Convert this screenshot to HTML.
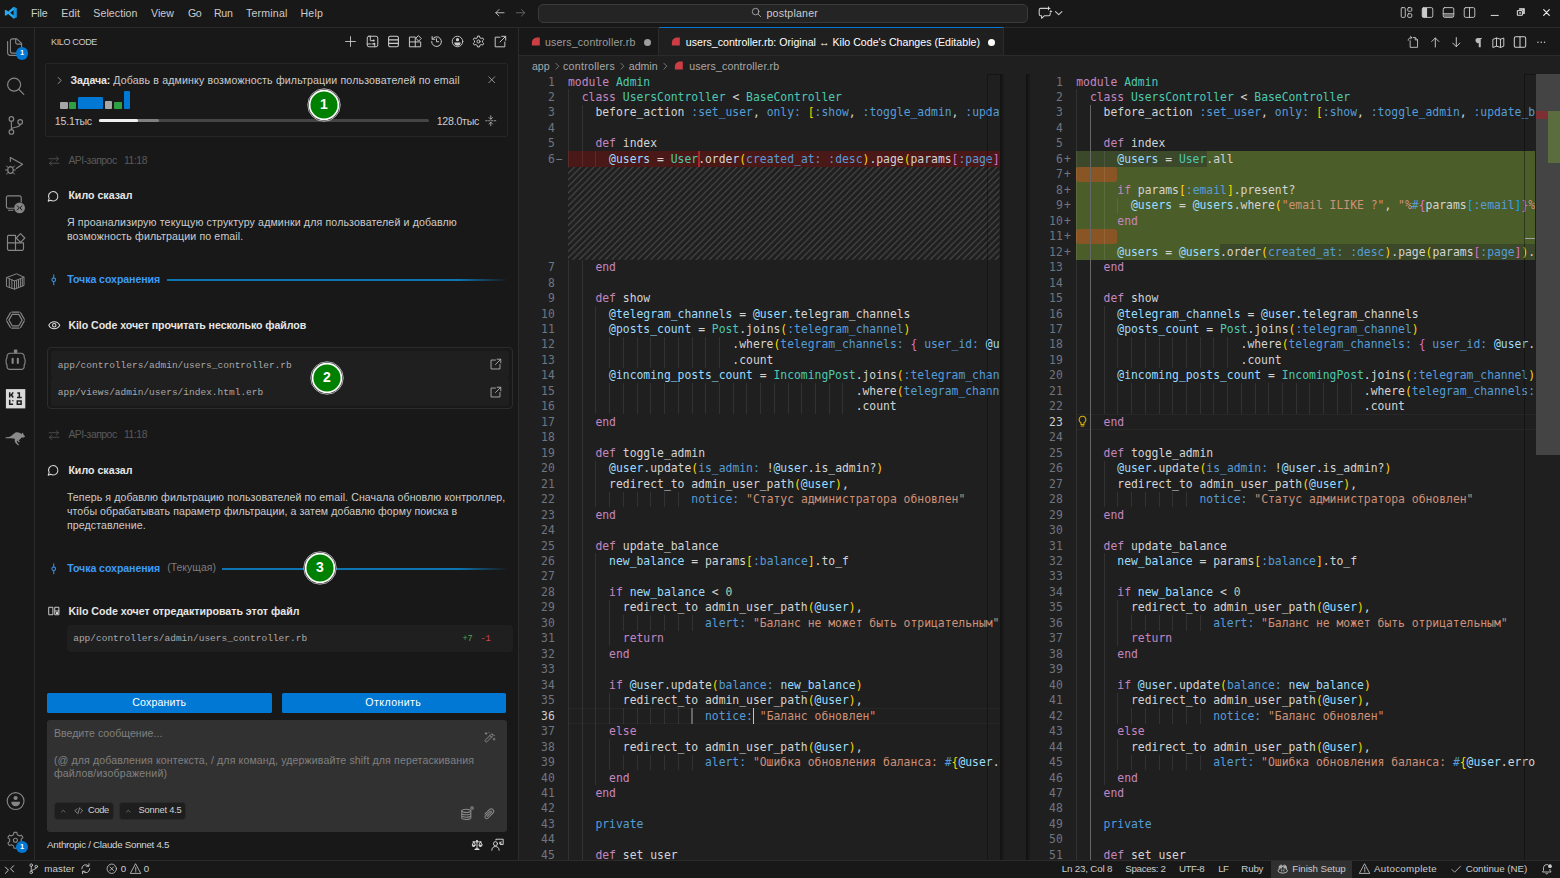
<!DOCTYPE html>
<html lang="ru"><head><meta charset="utf-8"><title>users_controller.rb - postplaner - Visual Studio Code</title>
<style>
html,body{margin:0;padding:0;background:#1f1f1f}
body{width:1560px;height:878px;position:relative;overflow:hidden;font-family:"Liberation Sans","DejaVu Sans",sans-serif;font-size:10.5px;color:#ccc;-webkit-font-smoothing:antialiased}
div,span,i,svg{position:absolute;box-sizing:border-box}
i{position:static;font-style:normal}
.t{white-space:nowrap;line-height:14px;height:14px}
.b{font-weight:bold}
.pane{overflow:hidden;font-family:"DejaVu Sans Mono","Liberation Mono",monospace;font-size:11.396px;color:#d4d4d4}
.cl{left:0;white-space:pre;height:15.466px;line-height:15.466px;letter-spacing:0;margin-top:.55px}
.ln{white-space:pre;height:15.466px;line-height:15.466px;margin-top:.55px;text-align:right;color:#6e7681;font-family:"DejaVu Sans Mono","Liberation Mono",monospace;font-size:11.396px}
.g{width:1px;background:rgba(255,255,255,.085)}
.k{color:#c586c0}.c{color:#4ec9b0}.b1,.b{}.s{color:#ce9178}.v{color:#9cdcfe}.n{color:#b5cea8}
i.b{color:#569cd6;font-weight:normal}
.br0{color:#ffd700}.br1{color:#da70d6}.br2{color:#179fff}
.mono{font-family:"Liberation Mono","DejaVu Sans Mono",monospace}
svg{overflow:visible}
</style></head><body>
<div id="editor" style="left:519px;top:55px;width:1041px;height:805px;background:#1f1f1f"></div><div class="pane" style="left:568.00px;top:0;width:431.50px;height:860px"><div style="left:0;top:151.33px;width:100%;height:15.47px;background:#4b1818"></div><div style="left:130.08px;top:151.33px;width:1.6px;height:15.47px;background:#a8272a"></div><div style="left:0;top:708.11px;width:100%;height:15.47px;border-top:1.6px solid #272727;border-bottom:1.6px solid #272727"></div><div class="g" style="left:0.00px;top:89.47px;height:773.30px"></div><div class="g" style="left:13.72px;top:104.93px;height:757.83px"></div><div class="g" style="left:27.45px;top:151.33px;height:108.26px"></div><div class="g" style="left:27.45px;top:305.99px;height:108.26px"></div><div class="g" style="left:27.45px;top:460.65px;height:46.40px"></div><div class="g" style="left:27.45px;top:553.45px;height:231.99px"></div><div class="g" style="left:41.17px;top:336.92px;height:30.93px"></div><div class="g" style="left:41.17px;top:383.32px;height:30.93px"></div><div class="g" style="left:41.17px;top:491.58px;height:15.47px"></div><div class="g" style="left:41.17px;top:599.84px;height:46.40px"></div><div class="g" style="left:41.17px;top:692.64px;height:30.93px"></div><div class="g" style="left:41.17px;top:739.04px;height:30.93px"></div><div class="g" style="left:54.90px;top:336.92px;height:30.93px"></div><div class="g" style="left:54.90px;top:383.32px;height:30.93px"></div><div class="g" style="left:54.90px;top:491.58px;height:15.47px"></div><div class="g" style="left:54.90px;top:615.31px;height:15.47px"></div><div class="g" style="left:54.90px;top:708.11px;height:15.47px"></div><div class="g" style="left:54.90px;top:754.50px;height:15.47px"></div><div class="g" style="left:68.62px;top:336.92px;height:30.93px"></div><div class="g" style="left:68.62px;top:383.32px;height:30.93px"></div><div class="g" style="left:68.62px;top:491.58px;height:15.47px"></div><div class="g" style="left:68.62px;top:615.31px;height:15.47px"></div><div class="g" style="left:68.62px;top:708.11px;height:15.47px"></div><div class="g" style="left:68.62px;top:754.50px;height:15.47px"></div><div class="g" style="left:82.34px;top:336.92px;height:30.93px"></div><div class="g" style="left:82.34px;top:383.32px;height:30.93px"></div><div class="g" style="left:82.34px;top:491.58px;height:15.47px"></div><div class="g" style="left:82.34px;top:615.31px;height:15.47px"></div><div class="g" style="left:82.34px;top:708.11px;height:15.47px"></div><div class="g" style="left:82.34px;top:754.50px;height:15.47px"></div><div class="g" style="left:96.07px;top:336.92px;height:30.93px"></div><div class="g" style="left:96.07px;top:383.32px;height:30.93px"></div><div class="g" style="left:96.07px;top:491.58px;height:15.47px"></div><div class="g" style="left:96.07px;top:615.31px;height:15.47px"></div><div class="g" style="left:96.07px;top:708.11px;height:15.47px"></div><div class="g" style="left:96.07px;top:754.50px;height:15.47px"></div><div class="g" style="left:109.79px;top:336.92px;height:30.93px"></div><div class="g" style="left:109.79px;top:383.32px;height:30.93px"></div><div class="g" style="left:109.79px;top:491.58px;height:15.47px"></div><div class="g" style="left:109.79px;top:615.31px;height:15.47px"></div><div class="g" style="left:109.79px;top:708.11px;height:15.47px"></div><div class="g" style="left:109.79px;top:754.50px;height:15.47px"></div><div class="g" style="left:123.52px;top:336.92px;height:30.93px"></div><div class="g" style="left:123.52px;top:383.32px;height:30.93px"></div><div class="g" style="left:123.52px;top:615.31px;height:15.47px"></div><div class="g" style="left:123.52px;top:708.11px;height:15.47px"></div><div class="g" style="left:123.52px;top:754.50px;height:15.47px"></div><div class="g" style="left:137.24px;top:336.92px;height:30.93px"></div><div class="g" style="left:137.24px;top:383.32px;height:30.93px"></div><div class="g" style="left:150.96px;top:336.92px;height:30.93px"></div><div class="g" style="left:150.96px;top:383.32px;height:30.93px"></div><div class="g" style="left:164.69px;top:383.32px;height:30.93px"></div><div class="g" style="left:178.41px;top:383.32px;height:30.93px"></div><div class="g" style="left:192.14px;top:383.32px;height:30.93px"></div><div class="g" style="left:205.86px;top:383.32px;height:30.93px"></div><div class="g" style="left:219.58px;top:383.32px;height:30.93px"></div><div class="g" style="left:233.31px;top:383.32px;height:30.93px"></div><div class="g" style="left:247.03px;top:383.32px;height:30.93px"></div><div class="g" style="left:260.76px;top:383.32px;height:30.93px"></div><div class="g" style="left:274.48px;top:383.32px;height:30.93px"></div><svg width="431.50" height="92.80" style="left:0;top:166.80px"><defs><pattern id="hp" width="6.5" height="6.5" patternUnits="userSpaceOnUse"><path d="M-1 7.500L7.500 -1M-1 1L1 -1M5.500 7.500L7.500 5.500" stroke="#cccccc" stroke-opacity=".23" stroke-width="1.150"/></pattern></defs><rect width="100%" height="100%" fill="#1f1f1f"/><rect width="100%" height="100%" fill="url(#hp)"/></svg><div class="cl" style="top:74.00px"><i class="k">module</i> <i class="c">Admin</i></div><div class="cl" style="top:89.47px">  <i class="k">class</i> <i class="c">UsersController</i> &lt; <i class="c">BaseController</i></div><div class="cl" style="top:104.93px">    before_action <i class="b">:set_user</i>, <i class="b">only:</i> <i class="br0">[</i><i class="b">:show</i>, <i class="b">:toggle_admin</i>, <i class="b">:update_balance</i><i class="br0">]</i></div><div class="cl" style="top:135.86px">    <i class="k">def</i> index</div><div class="cl" style="top:151.33px">      <i class="v">@users</i> = <i class="c">User</i>.order<i class="br0">(</i><i class="b">created_at:</i> <i class="b">:desc</i><i class="br0">)</i>.page<i class="br0">(</i>params<i class="br1">[</i><i class="b">:page</i><i class="br1">]</i><i class="br0">)</i>.per<i class="br0">(</i><i class="n">20</i><i class="br0">)</i></div><div class="cl" style="top:259.59px">    <i class="k">end</i></div><div class="cl" style="top:290.52px">    <i class="k">def</i> show</div><div class="cl" style="top:305.99px">      <i class="v">@telegram_channels</i> = <i class="v">@user</i>.telegram_channels</div><div class="cl" style="top:321.46px">      <i class="v">@posts_count</i> = <i class="c">Post</i>.joins<i class="br0">(</i><i class="b">:telegram_channel</i><i class="br0">)</i></div><div class="cl" style="top:336.92px">                        .where<i class="br0">(</i><i class="b">telegram_channels:</i> <i class="br1">{</i> <i class="b">user_id:</i> <i class="v">@user</i>.id <i class="br1">}</i><i class="br0">)</i></div><div class="cl" style="top:352.39px">                        .count</div><div class="cl" style="top:367.85px">      <i class="v">@incoming_posts_count</i> = <i class="c">IncomingPost</i>.joins<i class="br0">(</i><i class="b">:telegram_channel</i><i class="br0">)</i></div><div class="cl" style="top:383.32px">                                          .where<i class="br0">(</i><i class="b">telegram_channels:</i> <i class="br1">{</i> <i class="b">user_id:</i> <i class="v">@user</i>.id <i class="br1">}</i><i class="br0">)</i></div><div class="cl" style="top:398.79px">                                          .count</div><div class="cl" style="top:414.25px">    <i class="k">end</i></div><div class="cl" style="top:445.18px">    <i class="k">def</i> toggle_admin</div><div class="cl" style="top:460.65px">      <i class="v">@user</i>.update<i class="br0">(</i><i class="b">is_admin:</i> !<i class="v">@user</i>.is_admin?<i class="br0">)</i></div><div class="cl" style="top:476.12px">      redirect_to admin_user_path<i class="br0">(</i><i class="v">@user</i><i class="br0">)</i>,</div><div class="cl" style="top:491.58px">                  <i class="b">notice:</i> <i class="s">"Статус администратора обновлен"</i></div><div class="cl" style="top:507.05px">    <i class="k">end</i></div><div class="cl" style="top:537.98px">    <i class="k">def</i> update_balance</div><div class="cl" style="top:553.45px">      <i class="v">new_balance</i> = params<i class="br0">[</i><i class="b">:balance</i><i class="br0">]</i>.to_f</div><div class="cl" style="top:584.38px">      <i class="k">if</i> <i class="v">new_balance</i> &lt; <i class="n">0</i></div><div class="cl" style="top:599.84px">        redirect_to admin_user_path<i class="br0">(</i><i class="v">@user</i><i class="br0">)</i>,</div><div class="cl" style="top:615.31px">                    <i class="b">alert:</i> <i class="s">"Баланс не может быть отрицательным"</i></div><div class="cl" style="top:630.78px">        <i class="k">return</i></div><div class="cl" style="top:646.24px">      <i class="k">end</i></div><div class="cl" style="top:677.17px">      <i class="k">if</i> <i class="v">@user</i>.update<i class="br0">(</i><i class="b">balance:</i> <i class="v">new_balance</i><i class="br0">)</i></div><div class="cl" style="top:692.64px">        redirect_to admin_user_path<i class="br0">(</i><i class="v">@user</i><i class="br0">)</i>,</div><div class="cl" style="top:708.11px">                    <i class="b">notice:</i> <i class="s">"Баланс обновлен"</i></div><div class="cl" style="top:723.57px">      <i class="k">else</i></div><div class="cl" style="top:739.04px">        redirect_to admin_user_path<i class="br0">(</i><i class="v">@user</i><i class="br0">)</i>,</div><div class="cl" style="top:754.50px">                    <i class="b">alert:</i> <i class="s">"Ошибка обновления баланса: </i><i class="b">#</i><i class="br0">{</i><i class="v">@user</i>.errors.full_messages.join<i class="br1">(</i>', '<i class="br1">)</i><i class="br0">}</i><i class="s">"</i></div><div class="cl" style="top:769.97px">      <i class="k">end</i></div><div class="cl" style="top:785.44px">    <i class="k">end</i></div><div class="cl" style="top:816.37px">    <i class="b">private</i></div><div class="cl" style="top:847.30px">    <i class="k">def</i> set_user</div><div class="g" style="left:123.42px;top:708.11px;height:15.47px;background:#666;width:1.2px"></div><div style="left:184.67px;top:708.11px;width:1.5px;height:15.47px;background:#c4c4c4"></div></div><div class="ln" style="left:520px;top:74.00px;width:34.8px;color:#6e7681">1</div><div class="ln" style="left:520px;top:89.47px;width:34.8px;color:#6e7681">2</div><div class="ln" style="left:520px;top:104.93px;width:34.8px;color:#6e7681">3</div><div class="ln" style="left:520px;top:120.40px;width:34.8px;color:#6e7681">4</div><div class="ln" style="left:520px;top:135.86px;width:34.8px;color:#6e7681">5</div><div class="ln" style="left:520px;top:151.33px;width:34.8px;color:#6e7681">6</div><div class="ln" style="left:520px;top:259.59px;width:34.8px;color:#6e7681">7</div><div class="ln" style="left:520px;top:275.06px;width:34.8px;color:#6e7681">8</div><div class="ln" style="left:520px;top:290.52px;width:34.8px;color:#6e7681">9</div><div class="ln" style="left:520px;top:305.99px;width:34.8px;color:#6e7681">10</div><div class="ln" style="left:520px;top:321.46px;width:34.8px;color:#6e7681">11</div><div class="ln" style="left:520px;top:336.92px;width:34.8px;color:#6e7681">12</div><div class="ln" style="left:520px;top:352.39px;width:34.8px;color:#6e7681">13</div><div class="ln" style="left:520px;top:367.85px;width:34.8px;color:#6e7681">14</div><div class="ln" style="left:520px;top:383.32px;width:34.8px;color:#6e7681">15</div><div class="ln" style="left:520px;top:398.79px;width:34.8px;color:#6e7681">16</div><div class="ln" style="left:520px;top:414.25px;width:34.8px;color:#6e7681">17</div><div class="ln" style="left:520px;top:429.72px;width:34.8px;color:#6e7681">18</div><div class="ln" style="left:520px;top:445.18px;width:34.8px;color:#6e7681">19</div><div class="ln" style="left:520px;top:460.65px;width:34.8px;color:#6e7681">20</div><div class="ln" style="left:520px;top:476.12px;width:34.8px;color:#6e7681">21</div><div class="ln" style="left:520px;top:491.58px;width:34.8px;color:#6e7681">22</div><div class="ln" style="left:520px;top:507.05px;width:34.8px;color:#6e7681">23</div><div class="ln" style="left:520px;top:522.51px;width:34.8px;color:#6e7681">24</div><div class="ln" style="left:520px;top:537.98px;width:34.8px;color:#6e7681">25</div><div class="ln" style="left:520px;top:553.45px;width:34.8px;color:#6e7681">26</div><div class="ln" style="left:520px;top:568.91px;width:34.8px;color:#6e7681">27</div><div class="ln" style="left:520px;top:584.38px;width:34.8px;color:#6e7681">28</div><div class="ln" style="left:520px;top:599.84px;width:34.8px;color:#6e7681">29</div><div class="ln" style="left:520px;top:615.31px;width:34.8px;color:#6e7681">30</div><div class="ln" style="left:520px;top:630.78px;width:34.8px;color:#6e7681">31</div><div class="ln" style="left:520px;top:646.24px;width:34.8px;color:#6e7681">32</div><div class="ln" style="left:520px;top:661.71px;width:34.8px;color:#6e7681">33</div><div class="ln" style="left:520px;top:677.17px;width:34.8px;color:#6e7681">34</div><div class="ln" style="left:520px;top:692.64px;width:34.8px;color:#6e7681">35</div><div class="ln" style="left:520px;top:708.11px;width:34.8px;color:#ccc">36</div><div class="ln" style="left:520px;top:723.57px;width:34.8px;color:#6e7681">37</div><div class="ln" style="left:520px;top:739.04px;width:34.8px;color:#6e7681">38</div><div class="ln" style="left:520px;top:754.50px;width:34.8px;color:#6e7681">39</div><div class="ln" style="left:520px;top:769.97px;width:34.8px;color:#6e7681">40</div><div class="ln" style="left:520px;top:785.44px;width:34.8px;color:#6e7681">41</div><div class="ln" style="left:520px;top:800.90px;width:34.8px;color:#6e7681">42</div><div class="ln" style="left:520px;top:816.37px;width:34.8px;color:#6e7681">43</div><div class="ln" style="left:520px;top:831.83px;width:34.8px;color:#6e7681">44</div><div class="ln" style="left:520px;top:847.30px;width:34.8px;color:#6e7681">45</div><div class="ln" style="left:556px;top:151.33px;width:8px;text-align:left">−</div><div class="pane" style="left:1076.20px;top:0;width:459.30px;height:860px"><div style="left:0;top:151.33px;width:100%;height:108.26px;background:#4b5e2a"></div><div style="left:0;top:151.33px;width:130.38px;height:15.47px;background:#3b4829"></div><div style="left:144.10px;top:244.13px;right:0;height:15.47px;background:#3b4829"></div><div style="left:0;top:167.10px;width:41.17px;height:14.87px;background:#8a5524;border-radius:3px"></div><div style="left:0;top:228.96px;width:41.17px;height:14.87px;background:#8a5524;border-radius:3px"></div><div style="left:0;top:414.25px;width:100%;height:15.47px;border-top:1.6px solid #272727;border-bottom:1.6px solid #272727"></div><div class="g" style="left:0.00px;top:89.47px;height:773.30px"></div><div class="g" style="left:13.72px;top:104.93px;height:757.83px"></div><div class="g" style="left:27.45px;top:151.33px;height:108.26px"></div><div class="g" style="left:27.45px;top:305.99px;height:108.26px"></div><div class="g" style="left:27.45px;top:460.65px;height:46.40px"></div><div class="g" style="left:27.45px;top:553.45px;height:231.99px"></div><div class="g" style="left:41.17px;top:197.73px;height:15.47px"></div><div class="g" style="left:41.17px;top:336.92px;height:30.93px"></div><div class="g" style="left:41.17px;top:383.32px;height:30.93px"></div><div class="g" style="left:41.17px;top:491.58px;height:15.47px"></div><div class="g" style="left:41.17px;top:599.84px;height:46.40px"></div><div class="g" style="left:41.17px;top:692.64px;height:30.93px"></div><div class="g" style="left:41.17px;top:739.04px;height:30.93px"></div><div class="g" style="left:54.90px;top:336.92px;height:30.93px"></div><div class="g" style="left:54.90px;top:383.32px;height:30.93px"></div><div class="g" style="left:54.90px;top:491.58px;height:15.47px"></div><div class="g" style="left:54.90px;top:615.31px;height:15.47px"></div><div class="g" style="left:54.90px;top:708.11px;height:15.47px"></div><div class="g" style="left:54.90px;top:754.50px;height:15.47px"></div><div class="g" style="left:68.62px;top:336.92px;height:30.93px"></div><div class="g" style="left:68.62px;top:383.32px;height:30.93px"></div><div class="g" style="left:68.62px;top:491.58px;height:15.47px"></div><div class="g" style="left:68.62px;top:615.31px;height:15.47px"></div><div class="g" style="left:68.62px;top:708.11px;height:15.47px"></div><div class="g" style="left:68.62px;top:754.50px;height:15.47px"></div><div class="g" style="left:82.34px;top:336.92px;height:30.93px"></div><div class="g" style="left:82.34px;top:383.32px;height:30.93px"></div><div class="g" style="left:82.34px;top:491.58px;height:15.47px"></div><div class="g" style="left:82.34px;top:615.31px;height:15.47px"></div><div class="g" style="left:82.34px;top:708.11px;height:15.47px"></div><div class="g" style="left:82.34px;top:754.50px;height:15.47px"></div><div class="g" style="left:96.07px;top:336.92px;height:30.93px"></div><div class="g" style="left:96.07px;top:383.32px;height:30.93px"></div><div class="g" style="left:96.07px;top:491.58px;height:15.47px"></div><div class="g" style="left:96.07px;top:615.31px;height:15.47px"></div><div class="g" style="left:96.07px;top:708.11px;height:15.47px"></div><div class="g" style="left:96.07px;top:754.50px;height:15.47px"></div><div class="g" style="left:109.79px;top:336.92px;height:30.93px"></div><div class="g" style="left:109.79px;top:383.32px;height:30.93px"></div><div class="g" style="left:109.79px;top:491.58px;height:15.47px"></div><div class="g" style="left:109.79px;top:615.31px;height:15.47px"></div><div class="g" style="left:109.79px;top:708.11px;height:15.47px"></div><div class="g" style="left:109.79px;top:754.50px;height:15.47px"></div><div class="g" style="left:123.52px;top:336.92px;height:30.93px"></div><div class="g" style="left:123.52px;top:383.32px;height:30.93px"></div><div class="g" style="left:123.52px;top:615.31px;height:15.47px"></div><div class="g" style="left:123.52px;top:708.11px;height:15.47px"></div><div class="g" style="left:123.52px;top:754.50px;height:15.47px"></div><div class="g" style="left:137.24px;top:336.92px;height:30.93px"></div><div class="g" style="left:137.24px;top:383.32px;height:30.93px"></div><div class="g" style="left:150.96px;top:336.92px;height:30.93px"></div><div class="g" style="left:150.96px;top:383.32px;height:30.93px"></div><div class="g" style="left:164.69px;top:383.32px;height:30.93px"></div><div class="g" style="left:178.41px;top:383.32px;height:30.93px"></div><div class="g" style="left:192.14px;top:383.32px;height:30.93px"></div><div class="g" style="left:205.86px;top:383.32px;height:30.93px"></div><div class="g" style="left:219.58px;top:383.32px;height:30.93px"></div><div class="g" style="left:233.31px;top:383.32px;height:30.93px"></div><div class="g" style="left:247.03px;top:383.32px;height:30.93px"></div><div class="g" style="left:260.76px;top:383.32px;height:30.93px"></div><div class="g" style="left:274.48px;top:383.32px;height:30.93px"></div><div class="g" style="left:13.62px;top:104.93px;height:800px;background:#666;width:1.2px"></div><div class="cl" style="top:74.00px"><i class="k">module</i> <i class="c">Admin</i></div><div class="cl" style="top:89.47px">  <i class="k">class</i> <i class="c">UsersController</i> &lt; <i class="c">BaseController</i></div><div class="cl" style="top:104.93px">    before_action <i class="b">:set_user</i>, <i class="b">only:</i> <i class="br0">[</i><i class="b">:show</i>, <i class="b">:toggle_admin</i>, <i class="b">:update_balance</i><i class="br0">]</i></div><div class="cl" style="top:135.86px">    <i class="k">def</i> index</div><div class="cl" style="top:151.33px">      <i class="v">@users</i> = <i class="c">User</i>.all</div><div class="cl" style="top:182.26px">      <i class="k">if</i> params<i class="br0">[</i><i class="b">:email</i><i class="br0">]</i>.present?</div><div class="cl" style="top:197.73px">        <i class="v">@users</i> = <i class="v">@users</i>.where<i class="br0">(</i><i class="s">"email ILIKE ?"</i>, <i class="s">"%</i><i class="b">#</i><i class="br1">{</i>params<i class="br2">[</i><i class="b">:email</i><i class="br2">]</i><i class="br1">}</i><i class="s">%"</i><i class="br0">)</i></div><div class="cl" style="top:213.19px">      <i class="k">end</i></div><div class="cl" style="top:244.13px">      <i class="v">@users</i> = <i class="v">@users</i>.order<i class="br0">(</i><i class="b">created_at:</i> <i class="b">:desc</i><i class="br0">)</i>.page<i class="br0">(</i>params<i class="br1">[</i><i class="b">:page</i><i class="br1">]</i><i class="br0">)</i>.per<i class="br0">(</i><i class="n">20</i><i class="br0">)</i></div><div class="cl" style="top:259.59px">    <i class="k">end</i></div><div class="cl" style="top:290.52px">    <i class="k">def</i> show</div><div class="cl" style="top:305.99px">      <i class="v">@telegram_channels</i> = <i class="v">@user</i>.telegram_channels</div><div class="cl" style="top:321.46px">      <i class="v">@posts_count</i> = <i class="c">Post</i>.joins<i class="br0">(</i><i class="b">:telegram_channel</i><i class="br0">)</i></div><div class="cl" style="top:336.92px">                        .where<i class="br0">(</i><i class="b">telegram_channels:</i> <i class="br1">{</i> <i class="b">user_id:</i> <i class="v">@user</i>.id <i class="br1">}</i><i class="br0">)</i></div><div class="cl" style="top:352.39px">                        .count</div><div class="cl" style="top:367.85px">      <i class="v">@incoming_posts_count</i> = <i class="c">IncomingPost</i>.joins<i class="br0">(</i><i class="b">:telegram_channel</i><i class="br0">)</i></div><div class="cl" style="top:383.32px">                                          .where<i class="br0">(</i><i class="b">telegram_channels:</i> <i class="br1">{</i> <i class="b">user_id:</i> <i class="v">@user</i>.id <i class="br1">}</i><i class="br0">)</i></div><div class="cl" style="top:398.79px">                                          .count</div><div class="cl" style="top:414.25px">    <i class="k">end</i></div><div class="cl" style="top:445.18px">    <i class="k">def</i> toggle_admin</div><div class="cl" style="top:460.65px">      <i class="v">@user</i>.update<i class="br0">(</i><i class="b">is_admin:</i> !<i class="v">@user</i>.is_admin?<i class="br0">)</i></div><div class="cl" style="top:476.12px">      redirect_to admin_user_path<i class="br0">(</i><i class="v">@user</i><i class="br0">)</i>,</div><div class="cl" style="top:491.58px">                  <i class="b">notice:</i> <i class="s">"Статус администратора обновлен"</i></div><div class="cl" style="top:507.05px">    <i class="k">end</i></div><div class="cl" style="top:537.98px">    <i class="k">def</i> update_balance</div><div class="cl" style="top:553.45px">      <i class="v">new_balance</i> = params<i class="br0">[</i><i class="b">:balance</i><i class="br0">]</i>.to_f</div><div class="cl" style="top:584.38px">      <i class="k">if</i> <i class="v">new_balance</i> &lt; <i class="n">0</i></div><div class="cl" style="top:599.84px">        redirect_to admin_user_path<i class="br0">(</i><i class="v">@user</i><i class="br0">)</i>,</div><div class="cl" style="top:615.31px">                    <i class="b">alert:</i> <i class="s">"Баланс не может быть отрицательным"</i></div><div class="cl" style="top:630.78px">        <i class="k">return</i></div><div class="cl" style="top:646.24px">      <i class="k">end</i></div><div class="cl" style="top:677.17px">      <i class="k">if</i> <i class="v">@user</i>.update<i class="br0">(</i><i class="b">balance:</i> <i class="v">new_balance</i><i class="br0">)</i></div><div class="cl" style="top:692.64px">        redirect_to admin_user_path<i class="br0">(</i><i class="v">@user</i><i class="br0">)</i>,</div><div class="cl" style="top:708.11px">                    <i class="b">notice:</i> <i class="s">"Баланс обновлен"</i></div><div class="cl" style="top:723.57px">      <i class="k">else</i></div><div class="cl" style="top:739.04px">        redirect_to admin_user_path<i class="br0">(</i><i class="v">@user</i><i class="br0">)</i>,</div><div class="cl" style="top:754.50px">                    <i class="b">alert:</i> <i class="s">"Ошибка обновления баланса: </i><i class="b">#</i><i class="br0">{</i><i class="v">@user</i>.errors.full_messages.join<i class="br1">(</i>', '<i class="br1">)</i><i class="br0">}</i><i class="s">"</i></div><div class="cl" style="top:769.97px">      <i class="k">end</i></div><div class="cl" style="top:785.44px">    <i class="k">end</i></div><div class="cl" style="top:816.37px">    <i class="b">private</i></div><div class="cl" style="top:847.30px">    <i class="k">def</i> set_user</div></div><div class="ln" style="left:1028px;top:74.00px;width:34.8px;color:#6e7681">1</div><div class="ln" style="left:1028px;top:89.47px;width:34.8px;color:#6e7681">2</div><div class="ln" style="left:1028px;top:104.93px;width:34.8px;color:#6e7681">3</div><div class="ln" style="left:1028px;top:120.40px;width:34.8px;color:#6e7681">4</div><div class="ln" style="left:1028px;top:135.86px;width:34.8px;color:#6e7681">5</div><div class="ln" style="left:1028px;top:151.33px;width:34.8px;color:#6e7681">6</div><div class="ln" style="left:1028px;top:166.80px;width:34.8px;color:#6e7681">7</div><div class="ln" style="left:1028px;top:182.26px;width:34.8px;color:#6e7681">8</div><div class="ln" style="left:1028px;top:197.73px;width:34.8px;color:#6e7681">9</div><div class="ln" style="left:1028px;top:213.19px;width:34.8px;color:#6e7681">10</div><div class="ln" style="left:1028px;top:228.66px;width:34.8px;color:#6e7681">11</div><div class="ln" style="left:1028px;top:244.13px;width:34.8px;color:#6e7681">12</div><div class="ln" style="left:1028px;top:259.59px;width:34.8px;color:#6e7681">13</div><div class="ln" style="left:1028px;top:275.06px;width:34.8px;color:#6e7681">14</div><div class="ln" style="left:1028px;top:290.52px;width:34.8px;color:#6e7681">15</div><div class="ln" style="left:1028px;top:305.99px;width:34.8px;color:#6e7681">16</div><div class="ln" style="left:1028px;top:321.46px;width:34.8px;color:#6e7681">17</div><div class="ln" style="left:1028px;top:336.92px;width:34.8px;color:#6e7681">18</div><div class="ln" style="left:1028px;top:352.39px;width:34.8px;color:#6e7681">19</div><div class="ln" style="left:1028px;top:367.85px;width:34.8px;color:#6e7681">20</div><div class="ln" style="left:1028px;top:383.32px;width:34.8px;color:#6e7681">21</div><div class="ln" style="left:1028px;top:398.79px;width:34.8px;color:#6e7681">22</div><div class="ln" style="left:1028px;top:414.25px;width:34.8px;color:#ccc">23</div><div class="ln" style="left:1028px;top:429.72px;width:34.8px;color:#6e7681">24</div><div class="ln" style="left:1028px;top:445.18px;width:34.8px;color:#6e7681">25</div><div class="ln" style="left:1028px;top:460.65px;width:34.8px;color:#6e7681">26</div><div class="ln" style="left:1028px;top:476.12px;width:34.8px;color:#6e7681">27</div><div class="ln" style="left:1028px;top:491.58px;width:34.8px;color:#6e7681">28</div><div class="ln" style="left:1028px;top:507.05px;width:34.8px;color:#6e7681">29</div><div class="ln" style="left:1028px;top:522.51px;width:34.8px;color:#6e7681">30</div><div class="ln" style="left:1028px;top:537.98px;width:34.8px;color:#6e7681">31</div><div class="ln" style="left:1028px;top:553.45px;width:34.8px;color:#6e7681">32</div><div class="ln" style="left:1028px;top:568.91px;width:34.8px;color:#6e7681">33</div><div class="ln" style="left:1028px;top:584.38px;width:34.8px;color:#6e7681">34</div><div class="ln" style="left:1028px;top:599.84px;width:34.8px;color:#6e7681">35</div><div class="ln" style="left:1028px;top:615.31px;width:34.8px;color:#6e7681">36</div><div class="ln" style="left:1028px;top:630.78px;width:34.8px;color:#6e7681">37</div><div class="ln" style="left:1028px;top:646.24px;width:34.8px;color:#6e7681">38</div><div class="ln" style="left:1028px;top:661.71px;width:34.8px;color:#6e7681">39</div><div class="ln" style="left:1028px;top:677.17px;width:34.8px;color:#6e7681">40</div><div class="ln" style="left:1028px;top:692.64px;width:34.8px;color:#6e7681">41</div><div class="ln" style="left:1028px;top:708.11px;width:34.8px;color:#6e7681">42</div><div class="ln" style="left:1028px;top:723.57px;width:34.8px;color:#6e7681">43</div><div class="ln" style="left:1028px;top:739.04px;width:34.8px;color:#6e7681">44</div><div class="ln" style="left:1028px;top:754.50px;width:34.8px;color:#6e7681">45</div><div class="ln" style="left:1028px;top:769.97px;width:34.8px;color:#6e7681">46</div><div class="ln" style="left:1028px;top:785.44px;width:34.8px;color:#6e7681">47</div><div class="ln" style="left:1028px;top:800.90px;width:34.8px;color:#6e7681">48</div><div class="ln" style="left:1028px;top:816.37px;width:34.8px;color:#6e7681">49</div><div class="ln" style="left:1028px;top:831.83px;width:34.8px;color:#6e7681">50</div><div class="ln" style="left:1028px;top:847.30px;width:34.8px;color:#6e7681">51</div><div class="ln" style="left:1064px;top:151.33px;width:8px;text-align:left">+</div><div class="ln" style="left:1064px;top:166.80px;width:8px;text-align:left">+</div><div class="ln" style="left:1064px;top:182.26px;width:8px;text-align:left">+</div><div class="ln" style="left:1064px;top:197.73px;width:8px;text-align:left">+</div><div class="ln" style="left:1064px;top:213.19px;width:8px;text-align:left">+</div><div class="ln" style="left:1064px;top:228.66px;width:8px;text-align:left">+</div><div class="ln" style="left:1064px;top:244.13px;width:8px;text-align:left">+</div><div style="left:987.2px;top:74px;width:1px;height:786px;background:rgba(0,0,0,.32)"></div><div style="left:987.2px;top:74px;width:12.3px;height:1px;background:#141414"></div><div style="left:999.5px;top:74px;width:5px;height:786px;background:linear-gradient(90deg,rgba(0,0,0,.45),rgba(0,0,0,0))"></div><div style="left:1026px;top:74px;width:5px;height:786px;background:linear-gradient(90deg,rgba(0,0,0,.5),rgba(0,0,0,0))"></div><div style="left:1524.3px;top:74px;width:1px;height:786px;background:rgba(0,0,0,.38)"></div><div style="left:1524.3px;top:74px;width:11px;height:1px;background:#141414"></div><div style="left:1535.5px;top:74px;width:24.5px;height:381px;background:#444"></div><div style="left:1535.5px;top:111px;width:12.3px;height:8px;background:#7d3034"></div><div style="left:1547.8px;top:111.4px;width:12.2px;height:51.6px;background:#5b6c3f"></div><div style="left:1525.3px;top:237.6px;width:10.2px;height:1.6px;background:#a0a0a0"></div>
<div style="left:0;top:0;width:1560px;height:28px;background:#181818;border-bottom:1px solid #2b2b2b"></div>
<svg viewBox="0 0 16 16" width="13.50" height="13.50" style="left:3.75px;top:6.25px;color:#ccc;"><path fill="#2aaaf2" d="M11.5 1L15 2.6v10.8L11.5 15 5 9.5 2.2 11.7 1 11V5l1.2-.7L5 6.5z M11.5 4.8L7.2 8l4.3 3.2z"/><path fill="#0a7bc9" d="M11.5 1L15 2.6v10.8L11.5 15z" opacity=".55"/></svg>
<div class="t" style="letter-spacing:-0.145px;left:31.00px;top:5.90px;font-size:10.6px;color:#cccccc;">File</div>
<div class="t" style="letter-spacing:0.109px;left:61.30px;top:5.90px;font-size:10.6px;color:#cccccc;">Edit</div>
<div class="t" style="letter-spacing:0.067px;left:93.30px;top:5.90px;font-size:10.6px;color:#cccccc;">Selection</div>
<div class="t" style="letter-spacing:0.055px;left:151.00px;top:5.90px;font-size:10.6px;color:#cccccc;">View</div>
<div class="t" style="letter-spacing:-0.570px;left:188.00px;top:5.90px;font-size:10.6px;color:#cccccc;">Go</div>
<div class="t" style="letter-spacing:-0.312px;left:214.00px;top:5.90px;font-size:10.6px;color:#cccccc;">Run</div>
<div class="t" style="letter-spacing:0.184px;left:246.00px;top:5.90px;font-size:10.6px;color:#cccccc;">Terminal</div>
<div class="t" style="letter-spacing:0.176px;left:300.50px;top:5.90px;font-size:10.6px;color:#cccccc;">Help</div>
<svg viewBox="0 0 16 16" width="11.50" height="11.50" style="left:494.25px;top:6.85px;color:#cccccc;"><path fill="none" stroke="currentColor" stroke-width="1.2" stroke-linecap="round" stroke-linejoin="round" d="M14 8H2.5 M7 3.5L2.5 8l4.5 4.5"/></svg>
<svg viewBox="0 0 16 16" width="11.50" height="11.50" style="left:515.05px;top:6.85px;color:#6f6f6f;"><path fill="none" stroke="currentColor" stroke-width="1.2" stroke-linecap="round" stroke-linejoin="round" d="M2 8h11.5 M9 3.5l4.5 4.5-4.5 4.5"/></svg>
<div style="left:538.2px;top:3.5px;width:490px;height:19.5px;background:#242424;border:1px solid #3a3a3a;border-radius:5px"></div>
<svg viewBox="0 0 16 16" width="10.50" height="10.50" style="left:750.75px;top:7.05px;color:#bbbbbb;"><circle fill="none" stroke="currentColor" stroke-width="1.2" stroke-linecap="round" stroke-linejoin="round" cx="7" cy="7" r="5"/><path fill="none" stroke="currentColor" stroke-width="1.2" stroke-linecap="round" stroke-linejoin="round" d="M10.8 10.8l4 4"/></svg>
<div class="t" style="letter-spacing:0.202px;left:766.50px;top:5.90px;font-size:10.6px;color:#cccccc;">postplaner</div>
<svg viewBox="1036 4 30 18" width="30" height="18" style="left:1036px;top:4px"><path d="M1046.6 8.4H1040.7a1.5 1.5 0 0 0-1.5 1.5v4.4a1.5 1.5 0 0 0 1.5 1.5h.9v2.5l2.7-2.5h4.4a1.5 1.5 0 0 0 1.5-1.5v-1" fill="none" stroke="#ccc" stroke-width="1.05" stroke-linejoin="round" stroke-linecap="round"/><path fill="#ddd" d="M1048.5 6l.7 1.7 1.7.6-1.7.6-.7 1.700-.7-1.700-1.700-.6 1.700-.6z M1050.900 9.800l.5 1.200 1.200.5-1.200.5-.5 1.200-.5-1.200-1.200-.5 1.200-.5z"/><path d="M1055.500 11.600l3.200 3.100 3.200-3.100" fill="none" stroke="#ccc" stroke-width="1.050" stroke-linejoin="round" stroke-linecap="round"/></svg>
<svg viewBox="0 0 16 16" width="13.00" height="13.00" style="left:1399.50px;top:6.20px;color:#cccccc;"><rect fill="none" stroke="currentColor" stroke-width="1.1" stroke-linecap="round" stroke-linejoin="round" x="1.5" y="2" width="5" height="12" rx="1.2"/><rect fill="none" stroke="currentColor" stroke-width="1.1" stroke-linecap="round" stroke-linejoin="round" x="9.5" y="2" width="5" height="4.5" rx="1.2"/><rect fill="none" stroke="currentColor" stroke-width="1.1" stroke-linecap="round" stroke-linejoin="round" x="9.5" y="9.5" width="5" height="4.5" rx="1.2"/></svg>
<svg viewBox="0 0 16 16" width="13.00" height="13.00" style="left:1420.50px;top:6.20px;color:#cccccc;"><rect fill="none" stroke="currentColor" stroke-width="1.1" stroke-linecap="round" stroke-linejoin="round" x="1.5" y="2" width="13" height="12" rx="1.8"/><path fill="currentColor" d="M3 2h4.5v12H3a1.5 1.5 0 0 1-1.5-1.5v-9A1.5 1.5 0 0 1 3 2z"/></svg>
<svg viewBox="0 0 16 16" width="13.00" height="13.00" style="left:1441.80px;top:6.20px;color:#cccccc;"><rect fill="none" stroke="currentColor" stroke-width="1.1" stroke-linecap="round" stroke-linejoin="round" x="1.5" y="2" width="13" height="12" rx="1.8"/><path fill="none" stroke="currentColor" stroke-width="1.1" stroke-linecap="round" stroke-linejoin="round" d="M1.5 9.5h13"/><path fill="currentColor" opacity=".45" d="M2 10h12v2.5a1 1 0 0 1-1 1H3a1 1 0 0 1-1-1z"/></svg>
<svg viewBox="0 0 16 16" width="13.00" height="13.00" style="left:1463.00px;top:6.20px;color:#cccccc;"><rect fill="none" stroke="currentColor" stroke-width="1.1" stroke-linecap="round" stroke-linejoin="round" x="1.5" y="2" width="13" height="12" rx="1.8"/><path fill="none" stroke="currentColor" stroke-width="1.1" stroke-linecap="round" stroke-linejoin="round" d="M8 2v12"/></svg>
<svg viewBox="0 0 16 16" width="9.50" height="9.50" style="left:1490.05px;top:7.85px;color:#e6e6e6;"><path fill="none" stroke="currentColor" stroke-width="1.6" stroke-linecap="round" stroke-linejoin="round" d="M2 12.5h12"/></svg>
<svg viewBox="0 0 16 16" width="10.00" height="10.00" style="left:1516.00px;top:7.20px;color:#e6e6e6;"><path fill="currentColor" d="M5 2h9v9h-2.5V4.5H5z"/><rect fill="none" stroke="currentColor" stroke-width="1.6" stroke-linecap="round" stroke-linejoin="round" x="2.8" y="5.8" width="7.4" height="7.4"/><rect x="5.3" y="8.3" width="2.4" height="2.4" fill="currentColor"/></svg>
<svg viewBox="0 0 16 16" width="9.00" height="9.00" style="left:1542.40px;top:7.70px;color:#f0f0f0;"><path fill="none" stroke="currentColor" stroke-width="2" stroke-linecap="round" stroke-linejoin="round" d="M3 3l10 10 M13 3L3 13"/></svg>
<div style="left:0;top:28px;width:35px;height:832px;background:#181818;border-right:1px solid #2b2b2b"></div>
<svg viewBox="0 0 35 878" width="35" height="878" style="left:0;top:0"><path d="M12.4 38.8h4.4l4.8 4.6v7.7a2 2 0 0 1-2 2h-7.2a2 2 0 0 1-2-2v-10.3a2 2 0 0 1 2-2z M15.7 38.9v3.6a1.6 1.6 0 0 0 1.6 1.6h4.2 M7.6 41.5v11.3a2.6 2.6 0 0 0 2.6 2.6h7.5" fill="none" stroke="#868686" stroke-width="1.15" stroke-linecap="round" stroke-linejoin="round" /><circle cx="14.1" cy="84.7" r="6.5" fill="none" stroke="#868686" stroke-width="1.2"/><path d="M18.8 89.3l5 5" fill="none" stroke="#868686" stroke-width="1.2" stroke-linecap="round" stroke-linejoin="round" /><circle cx="11.4" cy="118.9" r="2.3" fill="none" stroke="#868686" stroke-width="1.15"/><circle cx="11.4" cy="131.9" r="2.3" fill="none" stroke="#868686" stroke-width="1.15"/><circle cx="20.2" cy="121.9" r="2.3" fill="none" stroke="#868686" stroke-width="1.15"/><path d="M11.4 121.2v8.4 M20.2 124.2c0 4.3-8.8 1.8-8.8 5.4" fill="none" stroke="#868686" stroke-width="1.15" stroke-linecap="round" stroke-linejoin="round" /><path d="M10.3 161.5v-3.9l12.3 6.6-6.3 4.3" fill="none" stroke="#868686" stroke-width="1.15" stroke-linecap="round" stroke-linejoin="round" /><ellipse cx="10.5" cy="170" rx="2.7" ry="3.3" fill="none" stroke="#868686" stroke-width="1.15"/><path d="M8.3 167.8l-1.7-1.8 M12.7 167.8l1.7-1.8 M7.8 170h-2.3 M13.2 170h2.3 M8.3 172.3l-1.8 1.7 M12.7 172.3l1.8 1.7 M9 167.3c.3-1.3 2.7-1.3 3 0" fill="none" stroke="#868686" stroke-width="1" stroke-linecap="round" stroke-linejoin="round" /><path d="M14 208.2H8a1.6 1.6 0 0 1-1.6-1.6v-9.1a1.6 1.6 0 0 1 1.6-1.6h11.6a1.6 1.6 0 0 1 1.6 1.6v4.5 M8.5 210.2h4.5" fill="none" stroke="#868686" stroke-width="1.15" stroke-linecap="round" stroke-linejoin="round" /><circle cx="19.6" cy="207.9" r="5.4" fill="#868686"/><path d="M17.3 205.8l1.9 2.1-1.9 2.1 M21.9 205.8l-1.9 2.1 1.9 2.1" fill="none" stroke="#181818" stroke-width="1" stroke-linecap="round" stroke-linejoin="round"/><path d="M8.7 235.3h6.8v15h-6.8a1.2 1.2 0 0 1-1.2-1.2v-12.6a1.2 1.2 0 0 1 1.2-1.2z M7.5 242.8h16v6.3a1.2 1.2 0 0 1-1.2 1.2h-6.8 M23.5 242.8" fill="none" stroke="#868686" stroke-width="1.15" stroke-linecap="round" stroke-linejoin="round" /><path d="M20.5 233.7l4.3 4.3-4.3 4.3-4.3-4.3z" fill="none" stroke="#868686" stroke-width="1.15" stroke-linecap="round" stroke-linejoin="round" /><path d="M6.8 277.5l9.7-3.7 7.5 3.4v8.3l-9.5 3.7-7.7-2.7z M6.8 277.5l7.7 3.5 9.5-3.8 M14.5 281v8.2 M9.3 279v8.4 M11.9 280.2v8.2 M16.6 280.8v7.3 M18.5 280.1v7.3 M20.4 279.3v7.3 M22.3 278.6v7.3" fill="none" stroke="#868686" stroke-width="1" stroke-linecap="round" stroke-linejoin="round" /><path d="M22.1 320.1 L18.8 325.82 L12.2 325.82 L8.9 320.1 L12.2 314.38 L18.8 314.38z" fill="none" stroke="#868686" stroke-width="1.15" stroke-linecap="round" stroke-linejoin="round" /><path d="M24.34 320.91 L20.62 327.35 M19.22 328.15 L11.78 328.15 M10.39 327.35 L6.66 320.91 M6.66 319.29 L10.38 312.85 M11.78 312.05 L19.22 312.05 M20.62 312.85 L24.34 319.29 " fill="none" stroke="#868686" stroke-width="1.15" stroke-linecap="round" stroke-linejoin="round" /><path d="M10.2 353.2h10.8a3.2 3.2 0 0 1 3.2 3.2v1.3c1.3.8 1.3 6.2 0 7v1.5a3.2 3.2 0 0 1-3.2 3.2h-10.8a3.2 3.2 0 0 1-3.2-3.2v-1.5c-1.3-.8-1.3-6.2 0-7v-1.3a3.2 3.2 0 0 1 3.2-3.2z" fill="none" stroke="#868686" stroke-width="1.15" stroke-linecap="round" stroke-linejoin="round" /><rect x="13.9" y="349.4" width="3.4" height="3.6" rx=".8" fill="#868686"/><rect x="11.6" y="357.8" width="2.1" height="6.1" rx="1" fill="#868686"/><rect x="16.8" y="357.8" width="2.1" height="6.1" rx="1" fill="#868686"/><rect x="5.9" y="389.1" width="19.4" height="19.3" fill="#dadada"/><path d="M9.7 392.3v5.2 M9.7 395h1.7l1.8-2.7 M11.4 395l1.8 2.5 M17.3 393h2v4.4 M17 397.4h4.7 M9.7 399.8v4.4h3.4 M12.8 400.2v1 M17.3 401h3.8v3.2h-3.8z" fill="none" stroke="#1c1c1c" stroke-width="1.5"/><path fill="#8a8a8a" d="M5.6 437.3L9 437.1C11.5 436.4 13 434 15.5 432.6C17.5 431.8 20 432.8 21.4 434L22.9 432.5L23.5 434.5L25.2 436.4L23.8 437.4L21.6 437.6C20.7 439 19.7 439.8 18.6 440L19.9 441.8L19 442.3L17 440.6C16.6 441.6 17.1 443 18.9 444.6L18.3 445.4L15.5 443C14.5 441.5 14.7 439.6 14.9 438.7C12.5 438.4 9 438.4 5.6 438.3z"/><circle cx="15.6" cy="801.1" r="8.4" fill="none" stroke="#868686" stroke-width="1.15"/><circle cx="15.6" cy="798" r="2.1" fill="#868686"/><path fill="#868686" d="M11.3 801.7h8.8c0 2.8-1.8 4.5-4.4 4.5s-4.4-1.7-4.4-4.5z"/><path d="M13.48 834.72 L14.01 832.42 L16.79 832.42 L17.32 834.72 L19.27 835.85 L21.53 835.16 L22.92 837.56 L21.19 839.17 L21.19 841.43 L22.92 843.04 L21.53 845.44 L19.27 844.75 L17.32 845.88 L16.79 848.18 L14.01 848.18 L13.48 845.88 L11.53 844.75 L9.27 845.44 L7.88 843.04 L9.61 841.43 L9.61 839.17 L7.88 837.56 L9.27 835.16 L11.53 835.85z" fill="none" stroke="#868686" stroke-width="1.1" stroke-linecap="round" stroke-linejoin="round" /><circle cx="15.4" cy="840.3" r="2" fill="none" stroke="#868686" stroke-width="1.1"/></svg>
<div style="left:15.90px;top:47.10px;width:12.6px;height:12.6px;border-radius:50%;background:#0078d4"></div>
<div class="t b" style="left:15.90px;top:47.20px;width:12.6px;text-align:center;font-size:7.5px;color:#fff;line-height:12.6px;height:12.6px">1</div>
<div style="left:15.80px;top:840.50px;width:12.6px;height:12.6px;border-radius:50%;background:#0078d4"></div>
<div class="t b" style="left:15.80px;top:840.60px;width:12.6px;text-align:center;font-size:7.5px;color:#fff;line-height:12.6px;height:12.6px">1</div>
<div style="left:35px;top:28px;width:484px;height:832px;background:#181818;border-right:1px solid #2b2b2b"></div>
<div class="t" style="letter-spacing:-0.335px;left:51.00px;top:34.50px;font-size:9px;color:#cccccc;">KILO CODE</div>
<svg viewBox="0 0 16 16" width="13.00" height="13.00" style="left:344.00px;top:35.10px;color:#cccccc;"><path fill="none" stroke="currentColor" stroke-width="1.1" stroke-linecap="round" stroke-linejoin="round" d="M8 2v12 M2 8h12"/></svg>
<svg viewBox="0 0 16 16" width="13.00" height="13.00" style="left:365.50px;top:35.10px;color:#cccccc;"><rect fill="none" stroke="currentColor" stroke-width="1.2" stroke-linecap="round" stroke-linejoin="round" x="1.5" y="1.5" width="13" height="13" rx="2.2"/><path fill="none" stroke="currentColor" stroke-width="1.2" stroke-linecap="round" stroke-linejoin="round" d="M5.3 1.5v5.5h3.5 M10.7 14.5v-3.5h-3.5 M1.5 11h4"/><circle cx="9.5" cy="6.8" r="1.3" fill="currentColor"/><circle cx="10.2" cy="10.8" r="1.3" fill="currentColor"/></svg>
<svg viewBox="0 0 16 16" width="13.00" height="13.00" style="left:387.20px;top:35.10px;color:#cccccc;"><rect fill="none" stroke="currentColor" stroke-width="1.3" stroke-linecap="round" stroke-linejoin="round" x="2" y="1.5" width="12" height="13" rx="2"/><path fill="none" stroke="currentColor" stroke-width="1.3" stroke-linecap="round" stroke-linejoin="round" d="M2 6h12 M2 10.3h12"/></svg>
<svg viewBox="0 0 16 16" width="13.00" height="13.00" style="left:408.50px;top:35.10px;color:#cccccc;"><path fill="none" stroke="currentColor" stroke-width="1.2" stroke-linecap="round" stroke-linejoin="round" d="M1 2.5h6.7v12h-6.7z M1 8.5h13.4v6h-6.7 M7.7 8.5"/><path fill="none" stroke="currentColor" stroke-width="1.2" stroke-linecap="round" stroke-linejoin="round" d="M11.9 1.1l3.2 3.2-3.2 3.2-3.2-3.2z" fill="#181818"/></svg>
<svg viewBox="0 0 16 16" width="13.00" height="13.00" style="left:429.50px;top:35.10px;color:#cccccc;"><path fill="none" stroke="currentColor" stroke-width="1.2" stroke-linecap="round" stroke-linejoin="round" d="M2.9 5A6 6 0 1 1 2 8 M2.6 1.8v3.4h3.4 M8 4.8v3.5h2.6"/></svg>
<svg viewBox="0 0 16 16" width="13.00" height="13.00" style="left:450.50px;top:35.10px;color:#cccccc;"><circle fill="none" stroke="currentColor" stroke-width="1.1" stroke-linecap="round" stroke-linejoin="round" cx="8" cy="8" r="6.5"/><circle cx="8" cy="5.8" r="2" fill="currentColor"/><path fill="currentColor" d="M4 9.3h8c0 2.5-1.7 4-4 4s-4-1.5-4-4z"/></svg>
<svg viewBox="0 0 16 16" width="13.00" height="13.00" style="left:471.50px;top:35.10px;color:#cccccc;"><circle fill="none" stroke="currentColor" stroke-width="1.2" stroke-linecap="round" stroke-linejoin="round" cx="8" cy="8" r="1.9"/><path fill="none" stroke="currentColor" stroke-width="1.2" stroke-linecap="round" stroke-linejoin="round" d="M6.37 3.27 L6.82 1.3 L9.18 1.3 L9.63 3.27 L11.28 4.23 L13.21 3.63 L14.39 5.67 L12.91 7.05 L12.91 8.95 L14.39 10.33 L13.21 12.37 L11.28 11.77 L9.63 12.73 L9.18 14.7 L6.82 14.7 L6.37 12.73 L4.72 11.77 L2.79 12.37 L1.61 10.33 L3.09 8.95 L3.09 7.05 L1.61 5.67 L2.79 3.63 L4.72 4.23z"/></svg>
<svg viewBox="0 0 16 16" width="14.00" height="14.00" style="left:492.50px;top:34.60px;color:#cccccc;"><path fill="none" stroke="currentColor" stroke-width="1.1" stroke-linecap="round" stroke-linejoin="round" d="M8 2.5H2.5v11h11V8 M10 1.5h4.5V6 M14.5 1.5L8 8"/></svg>
<div style="left:45.3px;top:63px;width:462.4px;height:74.3px;border:1px solid #262626;border-radius:2px;background:#191919"></div>
<svg viewBox="0 0 16 16" width="9.00" height="9.00" style="left:54.70px;top:75.80px;color:#cccccc;"><path fill="none" stroke="currentColor" stroke-width="1.2" stroke-linecap="round" stroke-linejoin="round" d="M5.5 2.5l5.5 5.5-5.5 5.5"/></svg>
<div class="t b" style="letter-spacing:-0.093px;left:70.50px;top:72.70px;font-size:10.6px;color:#e6e6e6;">Задача:</div>
<div class="t" style="letter-spacing:0.147px;left:113.30px;top:72.70px;font-size:10.6px;color:#cccccc;">Добавь в админку возможность фильтрации пользователей по email</div>
<svg viewBox="0 0 16 16" width="9.50" height="9.50" style="left:486.55px;top:75.25px;color:#cccccc;"><path fill="none" stroke="currentColor" stroke-width="1.1" stroke-linecap="round" stroke-linejoin="round" d="M3 3l10 10 M13 3L3 13"/></svg>
<div style="left:60.00px;top:101.70px;width:7.80px;height:7.10px;background:#a6a6a6;border-radius:1px"></div>
<div style="left:68.80px;top:101.70px;width:7.40px;height:7.10px;background:#2ea043;border-radius:1px"></div>
<div style="left:77.50px;top:97.00px;width:25.80px;height:11.80px;background:#0078d4;border-radius:1px"></div>
<div style="left:105.00px;top:101.30px;width:7.20px;height:7.50px;background:#a6a6a6;border-radius:1px"></div>
<div style="left:113.80px;top:101.70px;width:8.20px;height:7.10px;background:#2ea043;border-radius:1px"></div>
<div style="left:123.80px;top:91.20px;width:6.50px;height:17.60px;background:#0078d4;border-radius:1px"></div>
<div class="t" style="letter-spacing:-0.156px;left:54.70px;top:113.90px;font-size:10.6px;color:#cccccc;">15.1тыс</div>
<div style="left:98.7px;top:118.6px;width:330.5px;height:3.4px;border-radius:2px;background:#454545"></div>
<div style="left:98.7px;top:118.6px;width:60.3px;height:3.4px;border-radius:2px;background:#808080"></div>
<div style="left:98.7px;top:118.6px;width:39.3px;height:3.4px;border-radius:2px;background:#f0f0f0"></div>
<div class="t" style="letter-spacing:-0.223px;left:436.70px;top:113.90px;font-size:10.6px;color:#cccccc;">128.0тыс</div>
<svg viewBox="0 0 16 16" width="11.50" height="11.50" style="left:485.45px;top:115.05px;color:#cccccc;"><path fill="none" stroke="currentColor" stroke-width="1" stroke-linecap="round" stroke-linejoin="round" d="M8 1v4.5 M5.5 3.5l2.5 2.5 2.5-2.5 M8 15v-4.5 M5.5 12.5l2.5-2.5 2.5 2.5 M1 8h2 M5 8h2 M9 8h2 M13 8h2"/></svg>
<svg viewBox="0 0 16 16" width="12.00" height="12.00" style="left:47.90px;top:155.40px;color:#555555;"><path fill="none" stroke="currentColor" stroke-width="1.1" stroke-linecap="round" stroke-linejoin="round" d="M1.5 5h12.5 M11 2l3 3-3 3 M14.5 11H2 M5 8l-3 3 3 3"/></svg>
<div class="t" style="letter-spacing:-0.494px;left:68.40px;top:153.90px;font-size:10.4px;color:#5a5a5a;">API-запрос</div>
<div class="t" style="letter-spacing:-0.447px;left:124.00px;top:153.90px;font-size:10.4px;color:#5a5a5a;">11:18</div>
<svg viewBox="0 0 16 16" width="12.50" height="12.50" style="left:47.35px;top:189.75px;color:#dddddd;"><path fill="none" stroke="currentColor" stroke-width="1.35" stroke-linecap="round" stroke-linejoin="round" d="M8 2a6 6 0 1 1-3.2 11.1L1.5 14.3l1.2-3.3A6 6 0 0 1 8 2z"/></svg>
<div class="t b" style="letter-spacing:0.013px;left:68.40px;top:188.40px;font-size:10.6px;color:#e6e6e6;">Кило сказал</div>
<div class="t" style="letter-spacing:0.141px;left:66.90px;top:215.40px;font-size:10.6px;color:#cccccc;">Я проанализирую текущую структуру админки для пользователей и добавлю</div>
<div class="t" style="letter-spacing:0.126px;left:66.90px;top:229.40px;font-size:10.6px;color:#cccccc;">возможность фильтрации по email.</div>
<svg viewBox="0 0 16 16" width="11.50" height="11.50" style="left:48.15px;top:274.25px;color:#3a96f0;"><circle fill="none" stroke="currentColor" stroke-width="1.4" stroke-linecap="round" stroke-linejoin="round" cx="8" cy="8" r="2.6"/><path fill="none" stroke="currentColor" stroke-width="1.4" stroke-linecap="round" stroke-linejoin="round" d="M8 1v4.4 M8 10.6V15"/></svg>
<div class="t b" style="letter-spacing:-0.065px;left:67.20px;top:272.30px;font-size:10.6px;color:#3f9bf5;">Точка сохранения</div>
<div style="left:167.00px;top:279.00px;width:341.00px;height:1.8px;background:linear-gradient(90deg,#0d76b2 0,#0d76b2 85.3%,rgba(13,118,178,0) 100%)"></div>
<svg viewBox="0 0 16 16" width="12.50" height="12.50" style="left:47.65px;top:318.85px;color:#dddddd;"><path fill="none" stroke="currentColor" stroke-width="1.35" stroke-linecap="round" stroke-linejoin="round" d="M1 8c1.5-3 4-4.5 7-4.5s5.5 1.5 7 4.5c-1.5 3-4 4.5-7 4.5s-5.5-1.5-7-4.5z"/><circle fill="none" stroke="currentColor" stroke-width="1.35" stroke-linecap="round" stroke-linejoin="round" cx="8" cy="8" r="2.2"/></svg>
<div class="t b" style="letter-spacing:-0.057px;left:68.40px;top:317.80px;font-size:10.6px;color:#e6e6e6;">Kilo Code хочет прочитать несколько файлов</div>
<div style="left:47.1px;top:346.5px;width:465.8px;height:62.8px;border:1px solid #2c2c2c;border-radius:4px;background:#191919"></div>
<div style="left:51.4px;top:350.7px;width:457.2px;height:27px;background:#1f1f1f;border-radius:3px"></div>
<div style="left:51.4px;top:378.2px;width:457.2px;height:27.7px;background:#1f1f1f;border-radius:3px"></div>
<div class="t mono" style="letter-spacing:0.004px;left:57.80px;top:358.80px;font-size:9.5px;color:#a9a9a9;">app/controllers/admin/users_controller.rb</div>
<div class="t mono" style="letter-spacing:0.005px;left:57.80px;top:386.40px;font-size:9.5px;color:#a9a9a9;">app/views/admin/users/index.html.erb</div>
<svg viewBox="0 0 16 16" width="13.00" height="13.00" style="left:489.30px;top:358.10px;color:#b0b0b0;"><path fill="none" stroke="currentColor" stroke-width="1.1" stroke-linecap="round" stroke-linejoin="round" d="M8 2.5H2.5v11h11V8 M10 1.5h4.5V6 M14.5 1.5L8 8"/></svg>
<svg viewBox="0 0 16 16" width="13.00" height="13.00" style="left:489.30px;top:385.70px;color:#b0b0b0;"><path fill="none" stroke="currentColor" stroke-width="1.1" stroke-linecap="round" stroke-linejoin="round" d="M8 2.5H2.5v11h11V8 M10 1.5h4.5V6 M14.5 1.5L8 8"/></svg>
<svg viewBox="0 0 16 16" width="12.00" height="12.00" style="left:47.90px;top:429.20px;color:#555555;"><path fill="none" stroke="currentColor" stroke-width="1.1" stroke-linecap="round" stroke-linejoin="round" d="M1.5 5h12.5 M11 2l3 3-3 3 M14.5 11H2 M5 8l-3 3 3 3"/></svg>
<div class="t" style="letter-spacing:-0.494px;left:68.40px;top:427.70px;font-size:10.4px;color:#5a5a5a;">API-запрос</div>
<div class="t" style="letter-spacing:-0.447px;left:124.00px;top:427.70px;font-size:10.4px;color:#5a5a5a;">11:18</div>
<svg viewBox="0 0 16 16" width="12.50" height="12.50" style="left:47.35px;top:464.25px;color:#dddddd;"><path fill="none" stroke="currentColor" stroke-width="1.35" stroke-linecap="round" stroke-linejoin="round" d="M8 2a6 6 0 1 1-3.2 11.1L1.5 14.3l1.2-3.3A6 6 0 0 1 8 2z"/></svg>
<div class="t b" style="letter-spacing:0.013px;left:68.40px;top:462.90px;font-size:10.6px;color:#e6e6e6;">Кило сказал</div>
<div class="t" style="letter-spacing:0.091px;left:66.90px;top:489.70px;font-size:10.6px;color:#cccccc;">Теперь я добавлю фильтрацию пользователей по email. Сначала обновлю контроллер,</div>
<div class="t" style="letter-spacing:0.069px;left:66.90px;top:503.90px;font-size:10.6px;color:#cccccc;">чтобы обрабатывать параметр фильтрации, а затем добавлю форму поиска в</div>
<div class="t" style="letter-spacing:0.103px;left:66.90px;top:518.20px;font-size:10.6px;color:#cccccc;">представление.</div>
<svg viewBox="0 0 16 16" width="11.50" height="11.50" style="left:48.15px;top:563.05px;color:#3a96f0;"><circle fill="none" stroke="currentColor" stroke-width="1.4" stroke-linecap="round" stroke-linejoin="round" cx="8" cy="8" r="2.6"/><path fill="none" stroke="currentColor" stroke-width="1.4" stroke-linecap="round" stroke-linejoin="round" d="M8 1v4.4 M8 10.6V15"/></svg>
<div class="t b" style="letter-spacing:-0.065px;left:67.20px;top:561.10px;font-size:10.6px;color:#3f9bf5;">Точка сохранения</div>
<div class="t" style="letter-spacing:0.047px;left:167.20px;top:561.10px;font-size:10.4px;color:#7d7d7d;">(Текущая)</div>
<div style="left:222.20px;top:567.80px;width:285.80px;height:1.8px;background:linear-gradient(90deg,#0d76b2 0,#0d76b2 82.5%,rgba(13,118,178,0) 100%)"></div>
<svg viewBox="0 0 16 16" width="12.00" height="12.00" style="left:47.90px;top:604.90px;color:#dddddd;"><path fill="none" stroke="currentColor" stroke-width="1.2" stroke-linecap="round" stroke-linejoin="round" d="M1.5 3h5v10h-5z M9.5 3h5v10h-5z M9.5 8h5"/><rect x="10.5" y="9.5" width="3" height="2.5" fill="currentColor"/></svg>
<div class="t b" style="letter-spacing:0.000px;left:68.40px;top:603.50px;font-size:10.6px;color:#e6e6e6;">Kilo Code хочет отредактировать этот файл</div>
<div style="left:67.2px;top:625px;width:445.7px;height:26.5px;background:#1f1f1f;border-radius:4px"></div>
<div class="t mono" style="letter-spacing:0.004px;left:73.20px;top:632.00px;font-size:9.5px;color:#a9a9a9;">app/controllers/admin/users_controller.rb</div>
<div class="t mono" style="letter-spacing:-0.214px;left:462.50px;top:631.80px;font-size:8.6px;color:#4ea64e;">+7</div>
<div class="t mono" style="letter-spacing:-0.214px;left:480.50px;top:631.80px;font-size:8.6px;color:#d9434a;">-1</div>
<div style="left:47.10px;top:692.5px;width:224.90px;height:20.2px;background:#0078d4;border-radius:1.6px"></div>
<div class="t" style="letter-spacing:0.149px;left:132.30px;top:695.30px;font-size:10.6px;color:#ffffff;">Сохранить</div>
<div style="left:282.00px;top:692.5px;width:224.10px;height:20.2px;background:#0078d4;border-radius:1.6px"></div>
<div class="t" style="letter-spacing:0.424px;left:365.30px;top:695.30px;font-size:10.6px;color:#ffffff;">Отклонить</div>
<div style="left:46.6px;top:720.2px;width:460.3px;height:111.5px;background:#313131;border-radius:3px"></div>
<div class="t" style="letter-spacing:0.017px;left:53.90px;top:725.60px;font-size:10.6px;color:#808080;">Введите сообщение...</div>
<div class="t" style="letter-spacing:0.117px;left:53.90px;top:752.50px;font-size:10.6px;color:#808080;">(@ для добавления контекста, / для команд, удерживайте shift для перетаскивания</div>
<div class="t" style="letter-spacing:0.185px;left:53.90px;top:765.80px;font-size:10.6px;color:#808080;">файлов/изображений)</div>
<svg viewBox="0 0 16 16" width="13.00" height="13.00" style="left:482.50px;top:731.40px;color:#8c8c8c;"><g transform="rotate(45 8 8)"><rect fill="none" stroke="currentColor" stroke-width="1.1" stroke-linecap="round" stroke-linejoin="round" x="6.6" y="2.5" width="2.8" height="12.5" rx="1.2"/><path fill="none" stroke="currentColor" stroke-width="1.1" stroke-linecap="round" stroke-linejoin="round" d="M6.6 6h2.8"/></g><path fill="none" stroke="currentColor" stroke-width="1" stroke-linecap="round" stroke-linejoin="round" d="M3.8 1.8v2.4 M2.6 3h2.4 M13.6 8.8v2.4 M12.4 10h2.4 M7.2 1.6v.1 M14.3 5.5v.1"/></svg>
<div style="left:53.9px;top:801.9px;width:60.1px;height:17.8px;background:#1e1e1e;border:1px solid #2a2a2a;border-radius:3.5px"></div>
<div style="left:119.2px;top:801.9px;width:67.1px;height:17.8px;background:#1e1e1e;border:1px solid #2a2a2a;border-radius:3.5px"></div>
<svg viewBox="0 0 16 16" width="6.50" height="6.50" style="left:60.05px;top:807.55px;color:#9a9a9a;"><path fill="none" stroke="currentColor" stroke-width="1.4" stroke-linecap="round" stroke-linejoin="round" d="M3.5 10l4.5-4.5 4.5 4.5"/></svg>
<svg viewBox="0 0 16 16" width="9.50" height="9.50" style="left:73.55px;top:806.15px;color:#b0b0b0;"><path fill="none" stroke="currentColor" stroke-width="1.2" stroke-linecap="round" stroke-linejoin="round" d="M5 4.5L1.5 8l3.5 3.5 M11 4.5l3.5 3.5-3.5 3.5 M9.5 3l-3 10"/></svg>
<div class="t" style="letter-spacing:-0.359px;left:88.10px;top:803.30px;font-size:9.3px;color:#d0d0d0;">Code</div>
<svg viewBox="0 0 16 16" width="6.50" height="6.50" style="left:125.35px;top:807.55px;color:#9a9a9a;"><path fill="none" stroke="currentColor" stroke-width="1.4" stroke-linecap="round" stroke-linejoin="round" d="M3.5 10l4.5-4.5 4.5 4.5"/></svg>
<div class="t" style="letter-spacing:-0.198px;left:138.50px;top:803.30px;font-size:9.3px;color:#d0d0d0;">Sonnet 4.5</div>
<svg viewBox="0 0 16 16" width="12.60" height="12.60" style="left:459.60px;top:807.70px;color:#8c8c8c;"><ellipse fill="none" stroke="currentColor" stroke-width="1.3" stroke-linecap="round" stroke-linejoin="round" cx="8" cy="3.6" rx="5.8" ry="2.1"/><path fill="none" stroke="currentColor" stroke-width="1.3" stroke-linecap="round" stroke-linejoin="round" d="M2.2 3.6v8.8c0 1.2 2.6 2.1 5.8 2.1s5.8-.9 5.8-2.1v-8.8 M2.2 6.6c0 1.2 2.6 2.1 5.8 2.1s5.8-.9 5.8-2.1 M2.2 9.6c0 1.2 2.6 2.1 5.8 2.1s5.8-.9 5.8-2.1"/></svg>
<div style="left:470.3px;top:806px;width:3.6px;height:3.6px;border-radius:50%;background:#6a6a6a"></div>
<svg viewBox="0 0 16 16" width="13.50" height="13.50" style="left:482.25px;top:807.15px;color:#8c8c8c;"><g transform="rotate(45 8 8)"><path fill="none" stroke="currentColor" stroke-width="1.15" stroke-linecap="round" stroke-linejoin="round" d="M5 11.5v-7.5a3 3 0 0 1 6 0v8.5a2 2 0 0 1-4 0v-7.5a1 1 0 0 1 2 0v6.5"/></g></svg>
<div class="t" style="letter-spacing:-0.297px;left:47.10px;top:837.50px;font-size:9.8px;color:#d4d4d4;">Anthropic / Claude Sonnet 4.5</div>
<svg viewBox="0 0 16 16" width="12.00" height="12.00" style="left:471.00px;top:838.80px;color:#e0e0e0;"><path fill="none" stroke="currentColor" stroke-width="1.2" stroke-linecap="round" stroke-linejoin="round" d="M8 2v10.5 M2.5 3.8h11 M3.5 4l-2 4.3h4z M12.5 4l-2 4.3h4z"/><path fill="currentColor" d="M1.2 8.3h4.6a2.3 2.3 0 0 1-4.6 0z M10.2 8.3h4.6a2.3 2.3 0 0 1-4.6 0z M4.5 14.5c0-1.6 1.5-2.3 3.5-2.3s3.5.7 3.5 2.3z"/><circle cx="8" cy="2.5" r="1.2" fill="currentColor"/></svg>
<svg viewBox="0 0 16 16" width="13.00" height="13.00" style="left:490.70px;top:838.10px;color:#e0e0e0;"><circle fill="none" stroke="currentColor" stroke-width="1.1" stroke-linecap="round" stroke-linejoin="round" cx="5.5" cy="7" r="2.5"/><path fill="none" stroke="currentColor" stroke-width="1.1" stroke-linecap="round" stroke-linejoin="round" d="M1 15c0-3 2-4.5 4.5-4.5s4.5 1.5 4.5 4.5 M6 2.5V1.5h9v6.5h-3.5 M13 4.5l-2 2 M11 6.5h1.5 M11 6.5V5"/></svg>
<svg width="36" height="36" viewBox="-18 -18 36 36" style="left:306.20px;top:86.50px"><circle r="16.25" fill="#181818" stroke="#e0e0e0" stroke-width=".75"/><circle r="14.4" fill="#008000" stroke="#ffffff" stroke-width="1.7"/><text x="0" y="4.2" text-anchor="middle" font-family="Liberation Sans,DejaVu Sans,sans-serif" font-weight="bold" font-size="14" fill="#fff">1</text></svg>
<svg width="36" height="36" viewBox="-18 -18 36 36" style="left:308.70px;top:360.20px"><circle r="16.25" fill="#181818" stroke="#e0e0e0" stroke-width=".75"/><circle r="14.4" fill="#008000" stroke="#ffffff" stroke-width="1.7"/><text x="0" y="4.2" text-anchor="middle" font-family="Liberation Sans,DejaVu Sans,sans-serif" font-weight="bold" font-size="14" fill="#fff">2</text></svg>
<svg width="36" height="36" viewBox="-18 -18 36 36" style="left:301.90px;top:549.50px"><circle r="16.25" fill="#181818" stroke="#e0e0e0" stroke-width=".75"/><circle r="14.4" fill="#008000" stroke="#ffffff" stroke-width="1.7"/><text x="0" y="4.2" text-anchor="middle" font-family="Liberation Sans,DejaVu Sans,sans-serif" font-weight="bold" font-size="14" fill="#fff">3</text></svg>
<div style="left:519px;top:28px;width:1041px;height:27.5px;background:#181818;border-bottom:1px solid #2b2b2b"></div>
<div style="left:519px;top:28px;width:140px;height:27.5px;border-right:1px solid #2b2b2b;border-bottom:1px solid #2b2b2b"></div>
<svg viewBox="0 0 16 16" width="9.40" height="9.40" style="left:530.60px;top:36.90px;color:#cc3e44;"><path fill="currentColor" d="M15 14.5H1.5V9.5C1.5 4.5 5.5 1 12 1h3z"/></svg>
<div class="t" style="letter-spacing:0.176px;left:545.00px;top:35.20px;font-size:10.6px;color:#9d9d9d;">users_controller.rb</div>
<div style="left:643.5px;top:39px;width:7px;height:7px;border-radius:50%;background:#9d9d9d"></div>
<div style="left:659px;top:27.2px;width:344.5px;height:28.3px;background:#1f1f1f;border-right:1px solid #2b2b2b;border-top:1.6px solid #0078d4"></div>
<svg viewBox="0 0 16 16" width="9.40" height="9.40" style="left:670.60px;top:36.90px;color:#cc3e44;"><path fill="currentColor" d="M15 14.5H1.5V9.5C1.5 4.5 5.5 1 12 1h3z"/></svg>
<div class="t" style="letter-spacing:0.021px;left:685.80px;top:35.20px;font-size:10.6px;color:#ffffff;">users_controller.rb: Original ↔ Kilo Code's Changes (Editable)</div>
<div style="left:987.7px;top:39px;width:7px;height:7px;border-radius:50%;background:#ffffff"></div>
<svg viewBox="0 0 16 16" width="12.50" height="12.50" style="left:1406.95px;top:35.75px;color:#cccccc;"><path fill="none" stroke="currentColor" stroke-width="1.1" stroke-linecap="round" stroke-linejoin="round" d="M4 6v8.5h9.5V5L10.5 2H8 M10.5 2v3h3 M1.5 5.5c0-2.5 2-3.5 4.5-3.5 M4.5 .5l1.8 1.5-1.8 1.5"/></svg>
<svg viewBox="0 0 16 16" width="12.60" height="12.60" style="left:1429.20px;top:35.70px;color:#cccccc;"><path fill="none" stroke="currentColor" stroke-width="1.2" stroke-linecap="round" stroke-linejoin="round" d="M8 14V2.5 M3.5 7L8 2.5l4.5 4.5"/></svg>
<svg viewBox="0 0 16 16" width="12.60" height="12.60" style="left:1450.40px;top:35.70px;color:#cccccc;"><path fill="none" stroke="currentColor" stroke-width="1.2" stroke-linecap="round" stroke-linejoin="round" d="M8 2v11.5 M3.5 9l4.5 4.5 4.5-4.5"/></svg>
<svg viewBox="0 0 16 16" width="12.50" height="12.50" style="left:1471.55px;top:35.75px;color:#cccccc;"><path fill="currentColor" d="M7 2.5h5.5v1.3h-1.3v10.7h-2.6V9A3.25 3.25 0 0 1 7 2.5z" opacity=".9"/><path d="M8.6 3.8v4" stroke="#181818" stroke-width="0" fill="none"/></svg>
<svg viewBox="0 0 16 16" width="13.00" height="13.00" style="left:1492.40px;top:35.50px;color:#cccccc;"><path fill="none" stroke="currentColor" stroke-width="1.2" stroke-linecap="round" stroke-linejoin="round" d="M1.5 4l4-1.5 5 1.5 4-1.5v10l-4 1.5-5-1.5-4 1.5z M5.5 2.5v10 M10.5 4v10"/></svg>
<svg viewBox="0 0 16 16" width="14.00" height="14.00" style="left:1513.00px;top:35.00px;color:#cccccc;"><rect fill="none" stroke="currentColor" stroke-width="1.2" stroke-linecap="round" stroke-linejoin="round" x="1.5" y="2" width="13" height="12" rx="1.8"/><path fill="none" stroke="currentColor" stroke-width="1.2" stroke-linecap="round" stroke-linejoin="round" d="M8 2v12"/></svg>
<svg viewBox="0 0 16 16" width="10.50" height="10.50" style="left:1535.75px;top:36.75px;color:#cccccc;"><circle cx="3" cy="8" r="1.1" fill="currentColor"/><circle cx="8" cy="8" r="1.1" fill="currentColor"/><circle cx="13" cy="8" r="1.1" fill="currentColor"/></svg>
<div class="t" style="letter-spacing:-0.062px;left:532.00px;top:58.50px;font-size:10.6px;color:#a9a9a9;">app</div>
<svg viewBox="0 0 16 16" width="8.50" height="8.50" style="left:553.25px;top:61.75px;color:#a9a9a9;"><path fill="none" stroke="currentColor" stroke-width="1.2" stroke-linecap="round" stroke-linejoin="round" d="M5.5 2.5l5.5 5.5-5.5 5.5"/></svg>
<div class="t" style="letter-spacing:0.284px;left:563.00px;top:58.50px;font-size:10.6px;color:#a9a9a9;">controllers</div>
<svg viewBox="0 0 16 16" width="8.50" height="8.50" style="left:618.25px;top:61.75px;color:#a9a9a9;"><path fill="none" stroke="currentColor" stroke-width="1.2" stroke-linecap="round" stroke-linejoin="round" d="M5.5 2.5l5.5 5.5-5.5 5.5"/></svg>
<div class="t" style="letter-spacing:-0.032px;left:628.80px;top:58.50px;font-size:10.6px;color:#a9a9a9;">admin</div>
<svg viewBox="0 0 16 16" width="8.50" height="8.50" style="left:660.75px;top:61.75px;color:#a9a9a9;"><path fill="none" stroke="currentColor" stroke-width="1.2" stroke-linecap="round" stroke-linejoin="round" d="M5.5 2.5l5.5 5.5-5.5 5.5"/></svg>
<svg viewBox="0 0 16 16" width="9.40" height="9.40" style="left:674.20px;top:60.70px;color:#cc3e44;"><path fill="currentColor" d="M15 14.5H1.5V9.5C1.5 4.5 5.5 1 12 1h3z"/></svg>
<div class="t" style="letter-spacing:0.150px;left:689.30px;top:58.50px;font-size:10.6px;color:#a9a9a9;">users_controller.rb</div>
<svg viewBox="1076 414 14 14" width="14" height="14" style="left:1076px;top:414px"><path d="M1081 422.7a3.4 3.4 0 1 1 3 0v1.8h-3z M1081.1 426h2.8" fill="none" stroke="#dcb400" stroke-width="1.05" stroke-linejoin="round" stroke-linecap="round"/></svg>
<div style="left:0;top:860px;width:1560px;height:18px;background:#181818;border-top:1px solid #2b2b2b"></div>
<svg viewBox="0 0 16 16" width="11.00" height="11.00" style="left:3.60px;top:863.50px;color:#cccccc;"><path fill="none" stroke="currentColor" stroke-width="1.4" stroke-linecap="round" stroke-linejoin="round" d="M2 3.5l4.5 4.5-4.5 4.5 M14 1.5L9.5 6l4.5 4.5" transform="translate(0 1)"/></svg>
<svg viewBox="0 0 16 16" width="11.50" height="11.50" style="left:28.45px;top:863.25px;color:#cccccc;"><circle fill="none" stroke="currentColor" stroke-width="1.2" stroke-linecap="round" stroke-linejoin="round" cx="4.5" cy="3" r="1.8"/><circle fill="none" stroke="currentColor" stroke-width="1.2" stroke-linecap="round" stroke-linejoin="round" cx="4.5" cy="13" r="1.8"/><circle fill="none" stroke="currentColor" stroke-width="1.2" stroke-linecap="round" stroke-linejoin="round" cx="11.5" cy="5" r="1.8"/><path fill="none" stroke="currentColor" stroke-width="1.2" stroke-linecap="round" stroke-linejoin="round" d="M4.5 4.8v6.4 M11.5 6.8c0 3-7 2-7 4.4"/></svg>
<div class="t" style="letter-spacing:0.098px;left:44.20px;top:861.50px;font-size:9.75px;color:#cccccc;">master</div>
<svg viewBox="0 0 16 16" width="11.50" height="11.50" style="left:80.45px;top:863.25px;color:#cccccc;"><path fill="none" stroke="currentColor" stroke-width="1.2" stroke-linecap="round" stroke-linejoin="round" d="M2.5 8a5.5 5.5 0 0 1 9.5-3.8 M13.5 8a5.5 5.5 0 0 1-9.5 3.8 M12.5 1v3.5H9 M3.5 15v-3.5H7"/></svg>
<svg viewBox="0 0 16 16" width="11.50" height="11.50" style="left:106.45px;top:863.25px;color:#cccccc;"><circle fill="none" stroke="currentColor" stroke-width="1.1" stroke-linecap="round" stroke-linejoin="round" cx="8" cy="8" r="6.5"/><path fill="none" stroke="currentColor" stroke-width="1.1" stroke-linecap="round" stroke-linejoin="round" d="M5.5 5.5l5 5 M10.5 5.5l-5 5"/></svg>
<div class="t" style="left:120.80px;top:861.50px;font-size:9.75px;color:#cccccc;">0</div>
<svg viewBox="0 0 16 16" width="11.50" height="11.50" style="left:129.55px;top:863.05px;color:#cccccc;"><path fill="none" stroke="currentColor" stroke-width="1.1" stroke-linecap="round" stroke-linejoin="round" d="M8 1.5L15 14.5H1z M8 6v4.5 M8 12v.6"/></svg>
<div class="t" style="left:143.70px;top:861.50px;font-size:9.75px;color:#cccccc;">0</div>
<div class="t" style="letter-spacing:-0.165px;left:1061.70px;top:861.50px;font-size:9.75px;color:#cccccc;">Ln 23, Col 8</div>
<div class="t" style="letter-spacing:-0.331px;left:1125.30px;top:861.50px;font-size:9.75px;color:#cccccc;">Spaces: 2</div>
<div class="t" style="letter-spacing:-0.465px;left:1179.00px;top:861.50px;font-size:9.75px;color:#cccccc;">UTF-8</div>
<div class="t" style="letter-spacing:-0.800px;left:1218.30px;top:861.50px;font-size:9.75px;color:#cccccc;">LF</div>
<div class="t" style="letter-spacing:-0.191px;left:1241.30px;top:861.50px;font-size:9.75px;color:#cccccc;">Ruby</div>
<div style="left:1270.7px;top:861px;width:81px;height:17px;background:#303030"></div>
<svg viewBox="0 0 16 16" width="11.50" height="11.50" style="left:1276.55px;top:863.25px;color:#cccccc;"><path fill="none" stroke="currentColor" stroke-width="1.2" stroke-linecap="round" stroke-linejoin="round" d="M3 8.5V7c0-2 .5-4 2.5-4S8 4.5 8 5.5c0-1 .5-2.5 2.5-2.5S13 5 13 7v1.5 M3 8.5c-1 .5-1.5 1-1.5 2.5 0 1.5 3 3 6.5 3s6.5-1.5 6.5-3c0-1.5-.5-2-1.5-2.5 M6.5 9.5v1.5 M9.5 9.5v1.5"/><path fill="currentColor" d="M3.5 4h3.5v3.5h-3.5z M9 4h3.5v3.5H9z" opacity=".8"/></svg>
<div class="t" style="letter-spacing:-0.067px;left:1292.30px;top:861.50px;font-size:9.75px;color:#cccccc;">Finish Setup</div>
<svg viewBox="0 0 16 16" width="11.50" height="11.50" style="left:1359.25px;top:863.05px;color:#cccccc;"><path fill="none" stroke="currentColor" stroke-width="1.1" stroke-linecap="round" stroke-linejoin="round" d="M8 1.5L15 14.5H1z M8 6v4.5 M8 12v.6"/></svg>
<div class="t" style="letter-spacing:0.281px;left:1374.00px;top:861.50px;font-size:9.75px;color:#cccccc;">Autocomplete</div>
<svg viewBox="0 0 16 16" width="10.50" height="10.50" style="left:1450.75px;top:863.75px;color:#cccccc;"><path fill="none" stroke="currentColor" stroke-width="1.2" stroke-linecap="round" stroke-linejoin="round" d="M1.5 8.5l4 4 9-9"/></svg>
<div class="t" style="letter-spacing:-0.014px;left:1465.70px;top:861.50px;font-size:9.75px;color:#cccccc;">Continue (NE)</div>
<svg viewBox="0 0 16 16" width="11.50" height="11.50" style="left:1540.95px;top:863.25px;color:#cccccc;"><path fill="none" stroke="currentColor" stroke-width="1.2" stroke-linecap="round" stroke-linejoin="round" d="M9.5 2.3A4.5 4.5 0 0 0 3.5 6.5v4l-1.5 2h12l-1.5-2V9 M6.5 14.2a1.6 1.6 0 0 0 3 0"/><circle cx="12.5" cy="4.5" r="2.6" fill="currentColor"/></svg>
</body></html>
